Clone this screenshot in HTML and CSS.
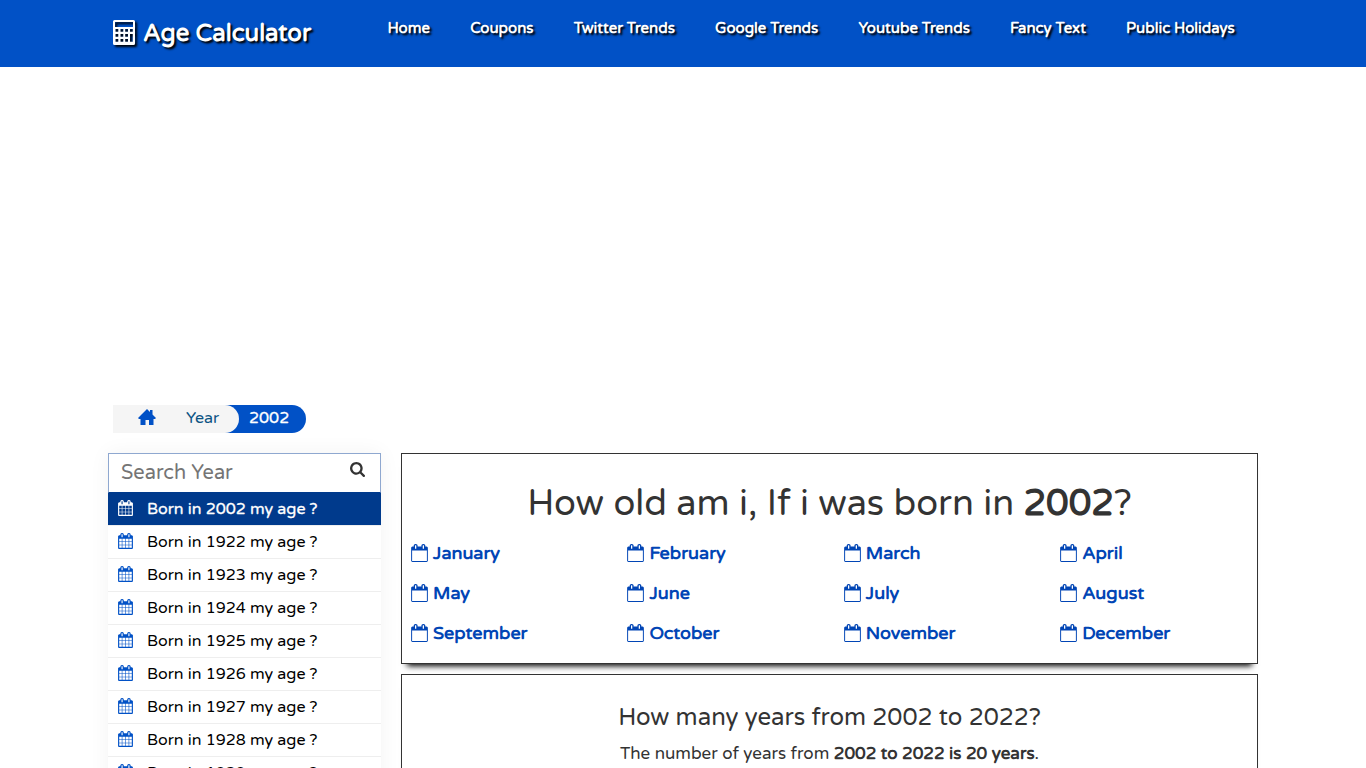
FILE: index.html
```html
<!DOCTYPE html>
<html lang="en">
<head>
    <meta charset="UTF-8">
    <meta name="viewport" content="width=device-width, initial-scale=1.0">
    <title>How old am i, If i was born in 2002?</title>
    <link rel="stylesheet" href="styles.css">
</head>
<body>
    <svg class="sprite" xmlns="http://www.w3.org/2000/svg">
        <symbol id="icon-calculator" viewBox="0 0 22 25">
            <path fill-rule="evenodd" d="M1.500 0h19q1.500 0 1.500 1.500v22q0 1.500-1.500 1.500h-19q-1.500 0-1.500-1.500v-22q0-1.500 1.500-1.500zM2 2v5h18v-5zM2.500 9v2.800h2.800v-2.800zM7.500 9v2.800h2.800v-2.800zM12.200 9v2.800h2.800v-2.800zM17 9v2.800h2.800v-2.800zM2.500 14v2.800h2.800v-2.800zM7.500 14v2.800h2.800v-2.800zM12.200 14v2.800h2.800v-2.800zM2.500 19v2.800h2.800v-2.800zM7.500 19v2.800h2.800v-2.800zM12.200 19v2.800h2.800v-2.800zM17 14v7.800h2.800v-7.800z"/>
        </symbol>
        <symbol id="icon-home" viewBox="0 0 18 16">
            <path d="M9 0l3 3v-2h2.500v4.500l3.500 3.500-1 1h-1.500v6h-4.500v-5h-3.500v5h-5v-6h-1.500l-1-1z"/>
        </symbol>
        <symbol id="icon-search" viewBox="0 0 1664 1664">
            <path d="M1152 704q0-185-131.500-316.500t-316.500-131.500-316.500 131.500-131.500 316.500 131.500 316.500 316.500 131.500 316.500-131.500 131.500-316.500zM1664 1536q0 52-38 90t-90 38q-54 0-90-38l-343-342q-179 124-399 124-143 0-273.500-55.500t-225-150-150-225-55.500-273.500 55.500-273.500 150-225 225-150 273.500-55.500 273.500 55.500 225 150 150 225 55.500 273.500q0 220-124 399l343 343q37 37 37 90z"/>
        </symbol>
        <symbol id="icon-calendar" viewBox="0 0 1664 1792">
            <path d="M128 1664h288v-288h-288v288zM480 1664h320v-288h-320v288zM128 1312h288v-320h-288v320zM480 1312h320v-320h-320v320zM128 928h288v-288h-288v288zM864 1664h320v-288h-320v288zM480 928h320v-288h-320v288zM1248 1664h288v-288h-288v288zM864 1312h320v-320h-320v320zM512 448v-288q0-13-9.500-22.500t-22.500-9.500h-64q-13 0-22.500 9.500t-9.500 22.500v288q0 13 9.500 22.500t22.500 9.500h64q13 0 22.500-9.500t9.500-22.500zM1248 1312h288v-320h-288v320zM864 928h320v-288h-320v288zM1248 928h288v-288h-288v288zM1280 448v-288q0-13-9.500-22.500t-22.500-9.500h-64q-13 0-22.500 9.500t-9.500 22.500v288q0 13 9.500 22.500t22.500 9.500h64q13 0 22.500-9.500t9.500-22.500zM1664 384v1280q0 52-38 90t-90 38h-1408q-52 0-90-38t-38-90v-1280q0-52 38-90t90-38h128v-96q0-66 47-113t113-47h64q66 0 113 47t47 113v96h384v-96q0-66 47-113t113-47h64q66 0 113 47t47 113v96h128q52 0 90 38t38 90z" fill-rule="evenodd"/>
        </symbol>
        <symbol id="icon-calendar-o" viewBox="0 0 1664 1792">
            <path d="M96 1696h1472v-1056h-1472v1056zM512 448v-288q0-13-9.500-22.500t-22.500-9.500h-64q-13 0-22.500 9.500t-9.500 22.500v288q0 13 9.500 22.500t22.500 9.500h64q13 0 22.500-9.500t9.500-22.500zM1280 448v-288q0-13-9.500-22.500t-22.500-9.500h-64q-13 0-22.500 9.500t-9.500 22.500v288q0 13 9.500 22.500t22.500 9.500h64q13 0 22.500-9.500t9.500-22.500zM1664 384v1280q0 52-38 90t-90 38h-1408q-52 0-90-38t-38-90v-1280q0-52 38-90t90-38h128v-96q0-66 47-113t113-47h64q66 0 113 47t47 113v96h384v-96q0-66 47-113t113-47h64q66 0 113 47t47 113v96h128q52 0 90 38t38 90z" fill-rule="evenodd"/>
        </symbol>
    </svg>

    <header class="header">
        <a class="logo" href="#"><svg class="logo-icon"><use href="#icon-calculator"/></svg><span>Age Calculator</span></a>
        <nav class="nav">
            <a href="#">Home</a>
            <a href="#">Coupons</a>
            <a href="#">Twitter Trends</a>
            <a href="#">Google Trends</a>
            <a href="#">Youtube Trends</a>
            <a href="#">Fancy Text</a>
            <a href="#">Public Holidays</a>
        </nav>
    </header>

    <div class="ad-space"></div>

    <div class="breadcrumb">
        <div class="crumb-trail">
            <a href="#" class="crumb-home"><svg><use href="#icon-home"/></svg></a>
            <a href="#">Year</a>
        </div>
        <span class="crumb-current">2002</span>
    </div>

    <div class="main">
        <aside class="sidebar">
            <div class="search">
                <input type="text" placeholder="Search Year">
                <svg><use href="#icon-search"/></svg>
            </div>
            <ul class="year-list">
                <li class="active"><svg><use href="#icon-calendar"/></svg><a href="#">Born in 2002 my age ?</a></li>
                <li><svg><use href="#icon-calendar"/></svg><a href="#">Born in 1922 my age ?</a></li>
                <li><svg><use href="#icon-calendar"/></svg><a href="#">Born in 1923 my age ?</a></li>
                <li><svg><use href="#icon-calendar"/></svg><a href="#">Born in 1924 my age ?</a></li>
                <li><svg><use href="#icon-calendar"/></svg><a href="#">Born in 1925 my age ?</a></li>
                <li><svg><use href="#icon-calendar"/></svg><a href="#">Born in 1926 my age ?</a></li>
                <li><svg><use href="#icon-calendar"/></svg><a href="#">Born in 1927 my age ?</a></li>
                <li><svg><use href="#icon-calendar"/></svg><a href="#">Born in 1928 my age ?</a></li>
                <li><svg><use href="#icon-calendar"/></svg><a href="#">Born in 1929 my age ?</a></li>
            </ul>
        </aside>

        <div class="content">
            <section class="card">
                <h1>How old am i, If i was born in <b>2002</b>?</h1>
                <div class="months">
                    <a href="#"><svg><use href="#icon-calendar-o"/></svg>January</a>
                    <a href="#"><svg><use href="#icon-calendar-o"/></svg>February</a>
                    <a href="#"><svg><use href="#icon-calendar-o"/></svg>March</a>
                    <a href="#"><svg><use href="#icon-calendar-o"/></svg>April</a>
                    <a href="#"><svg><use href="#icon-calendar-o"/></svg>May</a>
                    <a href="#"><svg><use href="#icon-calendar-o"/></svg>June</a>
                    <a href="#"><svg><use href="#icon-calendar-o"/></svg>July</a>
                    <a href="#"><svg><use href="#icon-calendar-o"/></svg>August</a>
                    <a href="#"><svg><use href="#icon-calendar-o"/></svg>September</a>
                    <a href="#"><svg><use href="#icon-calendar-o"/></svg>October</a>
                    <a href="#"><svg><use href="#icon-calendar-o"/></svg>November</a>
                    <a href="#"><svg><use href="#icon-calendar-o"/></svg>December</a>
                </div>
            </section>

            <section class="card card-years">
                <h2>How many years from 2002 to 2022?</h2>
                <p>The number of years from <b>2002 to 2022 is 20 years</b>.</p>
            </section>
        </div>
    </div>
</body>
</html>
```
FILE: styles.css
```css
* {
    box-sizing: border-box;
    margin: 0;
    padding: 0;
}

body {
    height: 768px;
    overflow: hidden;
    background-color: #fff;
    color: #333;
    font-family: 'Varela Round', 'Noto Sans', sans-serif;
    font-size: 16px;
}

a {
    color: inherit;
    text-decoration: none;
}

svg {
    fill: currentColor;
    flex-shrink: 0;
}

.sprite {
    display: none;
}

/* header */
.header {
    display: flex;
    height: 67px;
    padding-left: 113px;
    background-color: #0151c6;
    color: #fff;
    font-weight: 700;
    text-shadow: 2px 2px 2px #000;
    white-space: nowrap;
}

.logo {
    display: flex;
    width: 274.5px;
    height: 66px;
    align-items: center;
    gap: 8px;
    font-size: 24px;
}

.logo-icon {
    width: 22px;
    height: 25px;
    margin-bottom: 2px;
    filter: drop-shadow(2px 2px 1px #000);
}

.nav {
    display: flex;
    gap: 40.15px;
    line-height: 56px;
    font-size: 15px;
}

.ad-space {
    height: 338px;
}

/* breadcrumb */
.breadcrumb {
    display: flex;
    width: 193px;
    height: 28px;
    margin-left: 113px;
    line-height: 26px;
    border-radius: 0 14px 14px 0;
    background-color: #0151c6;
}

.crumb-trail {
    display: flex;
    width: 126px;
    padding-left: 25px;
    gap: 30px;
    background-color: #f5f5f5;
    border-radius: 0 14px 14px 0;
    color: #0c5484;
}

.crumb-home svg {
    display: block;
    width: 18px;
    height: 16px;
    margin-top: 4px;
    color: #0151c6;
}

.crumb-current {
    padding-left: 10px;
    color: #fff;
    -webkit-text-stroke: 0.3px #fff;
}

.main {
    display: flex;
    margin: 20px 108px 0;
    gap: 20px;
    align-items: flex-start;
}

/* sidebar */
.sidebar {
    width: 273px;
    flex-shrink: 0;
    box-shadow: 0 0 20px rgba(0, 0, 0, 0.05);
}

.search {
    display: flex;
    height: 40px;
    padding: 0 15px 0 12px;
    border: 1px solid #8fa8d0;
    border-bottom: 1px solid #003a8c;
    background-color: #fff;
}

.search input {
    width: 100%;
    min-width: 0;
    height: 38px;
    border: 0;
    outline: 0;
    font: 20px 'Varela Round', 'Noto Sans', sans-serif;
}

.search input::placeholder {
    color: #757575;
}

.search svg {
    width: 15px;
    height: 15px;
    margin-top: 8px;
}

.year-list {
    list-style: none;
}

.year-list li {
    display: flex;
    height: 33px;
    padding-left: 10px;
    gap: 14px;
    align-items: center;
    border-bottom: 1px solid #eee;
    background-color: #fff;
    color: #0151c6;
}

.year-list svg {
    width: 15px;
    height: 16px;
    margin-bottom: 2px;
}

.year-list a {
    color: #000;
}

.year-list .active {
    background-color: #003a8c;
    color: #fff;
}

.year-list .active a {
    color: #fff;
    -webkit-text-stroke: 0.3px #fff;
}

/* content */
.content {
    flex: 1;
    min-width: 0;
}

.card {
    height: 211px;
    margin-bottom: 10px;
    border: 1px solid #333;
    background-color: #fff;
    box-shadow: 0 8px 6px -6px #000;
    text-align: center;
}

.card h1 {
    margin-top: 23px;
    font-size: 36px;
    font-weight: 400;
    line-height: 54px;
    white-space: nowrap;
}

.card b {
    font-weight: 700;
}

.months {
    display: grid;
    grid-template-columns: repeat(4, 216.4px);
    grid-auto-rows: 40px;
    margin-top: 2px;
    padding-left: 9px;
}

.months a {
    display: flex;
    align-items: center;
    gap: 5px;
    color: #0145b5;
    font-size: 18px;
    font-weight: 700;
}

.months svg {
    width: 17px;
    height: 18px;
}

.card-years h2 {
    margin-top: 25px;
    font-size: 24px;
    font-weight: 400;
    line-height: 36px;
}

.card-years p {
    margin-top: 5px;
    font-size: 17px;
    line-height: 26px;
}
```
